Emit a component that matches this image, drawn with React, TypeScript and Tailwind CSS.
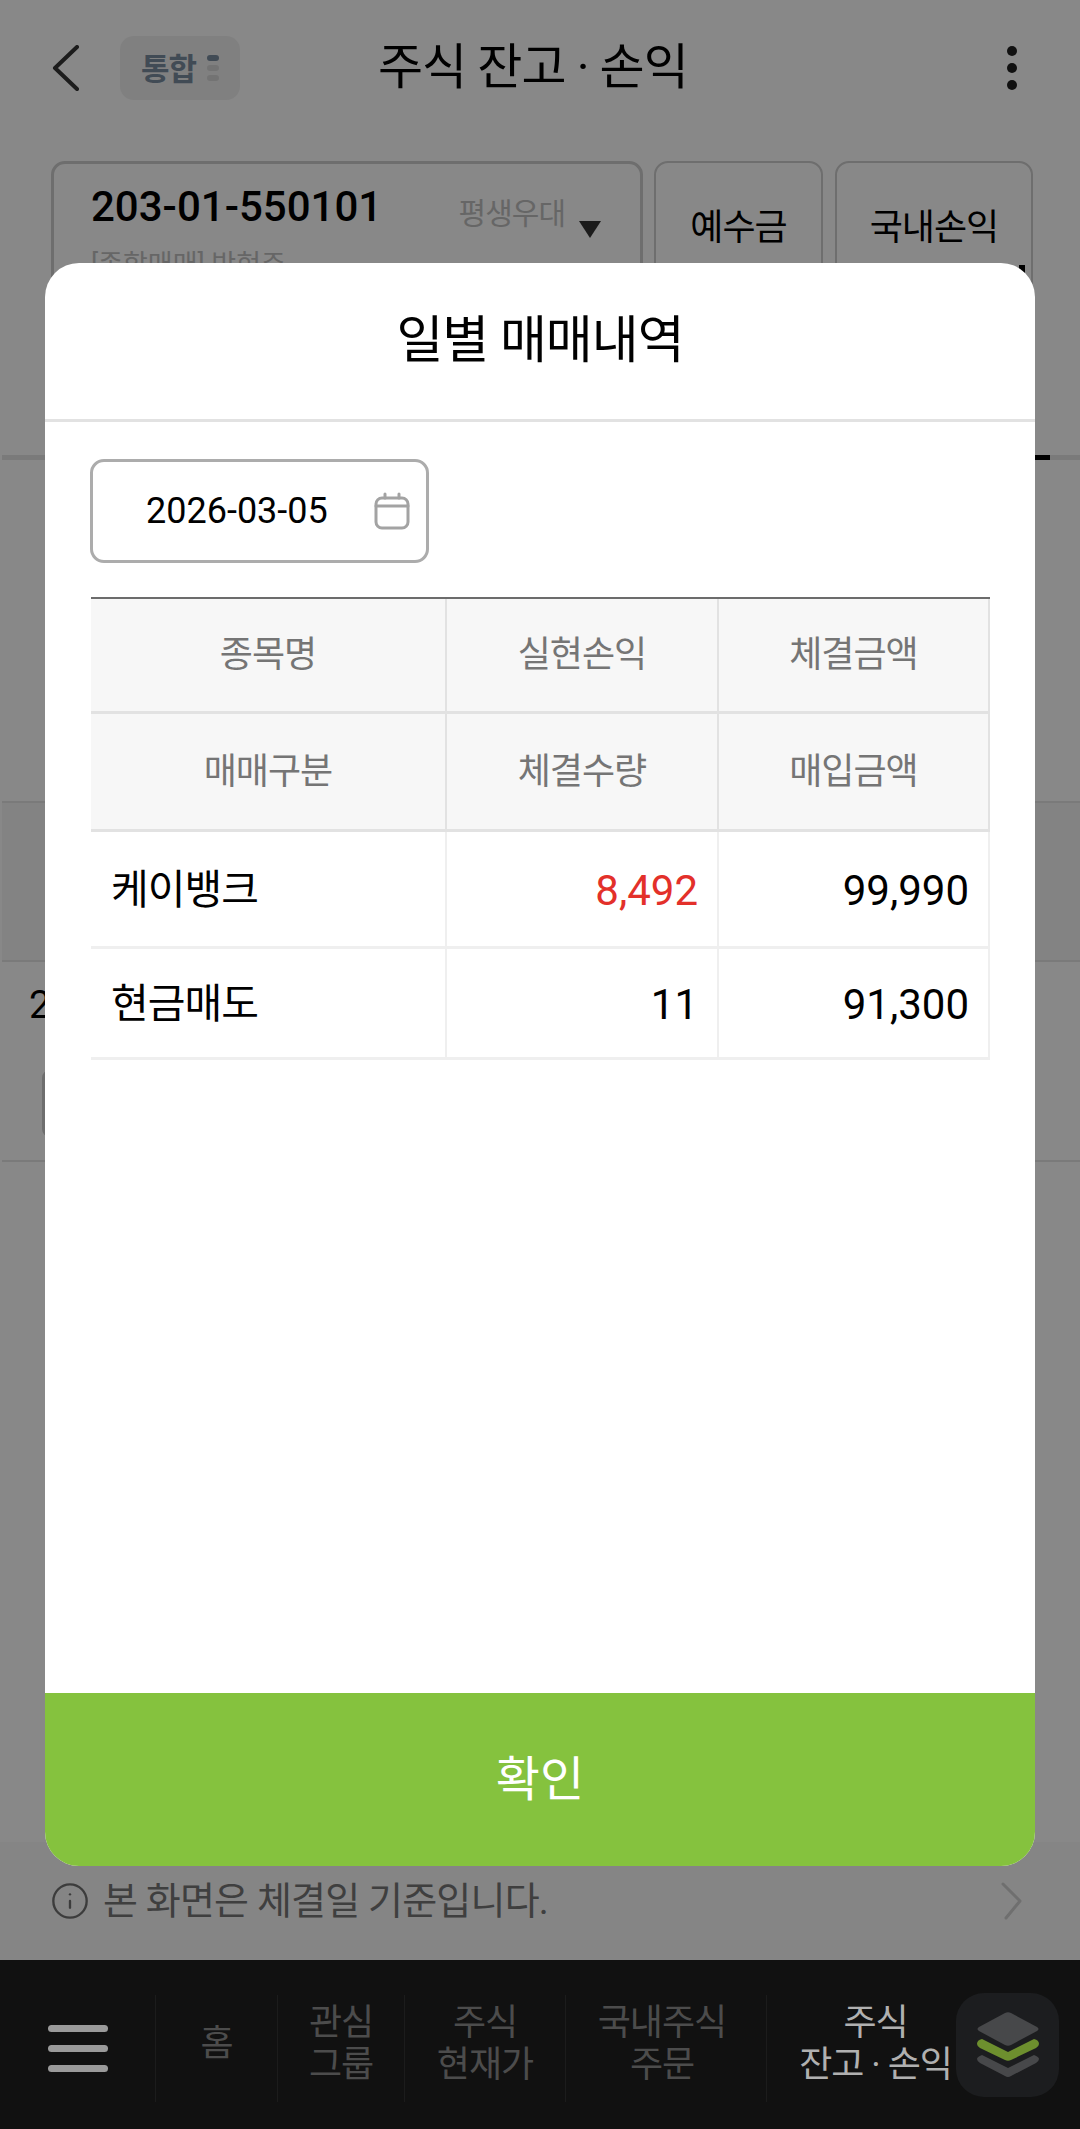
import React from 'react';
import { Info } from 'lucide-react';

const KR = "font-['Roboto','Noto_Sans_CJK_KR',sans-serif]";
const COLS = 'grid grid-cols-[356px_272px_271px]';

function HeaderCell({ label }: { label: string }) {
  return (
    <div className="flex items-center justify-center border-r-2 border-[#e2e2e2] bg-[#f7f7f7] text-[36px] tracking-[-1px] text-[#757575]">
      {label}
    </div>
  );
}

function NameCell({ label }: { label: string }) {
  return <div className="flex items-center border-r-2 border-[#efefef] pl-[20px] pt-[3px] text-[41px] tracking-[-1px]">{label}</div>;
}

function NumCell({ label, red }: { label: string; red?: boolean }) {
  return (
    <div className={`flex items-center justify-end border-r-2 border-[#efefef] pr-[19px] pt-[2px] text-[42px] ${red ? 'text-[#e3302a]' : 'text-black'}`}>
      {label}
    </div>
  );
}

function NavItem({ lines, width, active }: { lines: string[]; width: string; active?: boolean }) {
  return (
    <div className={`flex h-[107px] flex-col items-center justify-center border-l border-[#1c1c1c] pb-[9px] text-[36px] leading-[42px] tracking-[-1px] ${width} ${active ? 'text-[#b0b0b0]' : 'text-[#4c4c4c]'}`}>
      {lines.map((line) => (
        <span key={line} className="whitespace-nowrap">{line}</span>
      ))}
    </div>
  );
}

export default function App() {
  return (
    <div className={`relative h-[2129px] w-[1080px] overflow-hidden bg-[#888888] text-black ${KR}`}>
      {/* page behind the dim layer */}
      <div className="flex h-[136px] items-center pl-[51px] pr-[63px]">
        <svg width="30" height="46" viewBox="0 0 30 46" fill="none">
          <path d="M26 2 L4 23 L26 44" stroke="#1c1c1c" strokeWidth="4" strokeLinecap="round" strokeLinejoin="round" />
        </svg>
        <div className="ml-[39px] flex h-[64px] w-[120px] items-center justify-center gap-[11px] rounded-[14px] bg-[#808080]">
          <span className="pt-[5px] text-[31px] font-bold tracking-[-1px] text-[#414b55]">통합</span>
          <div className="flex flex-col gap-[4px]">
            <span className="h-[6px] w-[12px] rounded-full bg-[#414b55]" />
            <span className="h-[6px] w-[12px] rounded-full bg-[#737373]" />
            <span className="h-[6px] w-[12px] rounded-full bg-[#737373]" />
          </div>
        </div>
        <h1 className="ml-[138px] flex-1 text-[49px] tracking-[-1px]">주식 잔고 · 손익</h1>
        <div className="flex flex-col gap-[7px]">
          <span className="h-[10px] w-[10px] rounded-full bg-[#111111]" />
          <span className="h-[10px] w-[10px] rounded-full bg-[#111111]" />
          <span className="h-[10px] w-[10px] rounded-full bg-[#111111]" />
        </div>
      </div>

      <div className="mt-[25px] flex pl-[51px]">
        <div className="h-[140px] w-[592px] rounded-[14px] border-[3px] border-[#6e6e6e] px-[37px] pt-[11px]">
          <div className="flex items-center justify-between">
            <span className="text-[42px] font-medium">203-01-550101</span>
            <div className="mr-[2px] mt-[14px] flex items-center gap-[14px]">
              <span className="text-[30px] tracking-[-1px] text-[#666666]">평생우대</span>
              <span className="mt-[32px] h-0 w-0 border-x-[11px] border-t-[17px] border-x-transparent border-t-[#1c1c1c]" />
            </div>
          </div>
          <div className="mt-[7px] text-[27px] text-[#666666]">[종합매매] 박현주</div>
        </div>
        <div className="ml-[11px] flex h-[140px] w-[169px] justify-center rounded-[14px] border-2 border-[#6e6e6e] pt-[38px] text-[36px] tracking-[-1px]">예수금</div>
        <div className="relative ml-[12px] flex h-[140px] w-[198px] justify-center rounded-[14px] border-2 border-[#6e6e6e] pt-[38px] text-[36px] tracking-[-1px]">
          국내손익
          <span className="absolute left-[182px] top-[102px] h-[12px] w-[6px] bg-black" />
        </div>
      </div>

      <div className="ml-[2px] mt-[154px] flex h-[5px] justify-end bg-[#7a7a7a]">
        <div className="mr-[30px] h-[5px] w-[40px] bg-black" />
      </div>

      <div className="ml-[2px] mt-[341px] h-[161px] border-y-2 border-[#7a7a7a] bg-[#838383]" />
      <div className="pl-[29px] pt-[23px] text-[39px] leading-[40px]">2</div>
      <div className="ml-[42px] mt-[45px] h-[67px] w-[40px] rounded-[8px] border-[3px] border-[#6e6e6e]" />
      <div className="ml-[2px] mt-[23px] h-[2px] bg-[#7a7a7a]" />

      {/* footer strip with the notice */}
      <div className="absolute inset-x-0 top-[1842px] flex h-[118px] items-center bg-[#858585] pl-[50px] pr-[58px]">
        <Info className="h-[40px] w-[40px] text-[#3c3c3c]" strokeWidth={1.4} />
        <span className="ml-[13px] flex-1 text-[38px] tracking-[-0.8px] text-[#3f3f3f]">본 화면은 체결일 기준입니다.</span>
        <svg width="21" height="38" viewBox="0 0 21 38" fill="none">
          <path d="M2 2 L19 19 L5 36" stroke="#6f6f6f" strokeWidth="3" strokeLinecap="round" strokeLinejoin="round" />
        </svg>
      </div>

      {/* bottom navigation */}
      <div className="absolute inset-x-0 bottom-0 flex h-[169px] items-start bg-[#111111] pt-[35px]">
        <div className="flex h-[107px] w-[155px] flex-col items-center justify-center gap-[13px]">
          <span className="h-[7px] w-[60px] rounded-full bg-[#9a9a9a]" />
          <span className="h-[7px] w-[60px] rounded-full bg-[#9a9a9a]" />
          <span className="h-[7px] w-[60px] rounded-full bg-[#9a9a9a]" />
        </div>
        <NavItem lines={['홈']} width="w-[122px]" />
        <NavItem lines={['관심', '그룹']} width="w-[127px]" />
        <NavItem lines={['주식', '현재가']} width="w-[161px]" />
        <NavItem lines={['국내주식', '주문']} width="w-[201px] pr-[8px]" />
        <NavItem lines={['주식', '잔고 · 손익']} width="w-[224px] pr-[6px]" active />
      </div>

      {/* floating layers button */}
      <div className="absolute left-[956px] top-[1993px] flex h-[104px] w-[103px] items-center justify-center rounded-[28px] bg-[#1c1d1f]">
        <svg width="64" height="68" viewBox="0 0 64 68" fill="none">
          <path d="M29 2 Q32 0.5 35 2 L61 16 Q64 18 61 20 L35 34 Q32 35.5 29 34 L3 20 Q0 18 3 16 Z" fill="#47484a" />
          <path d="M6 28 L32 41 L58 28 Q63 29 63 33 Q63 35 60 37 L35 49 Q32 50.5 29 49 L4 37 Q1 35 1 33 Q1 29 6 28 Z" fill="#6d8f2e" />
          <path d="M6 44 L32 57 L58 44 Q63 46 63 48 Q63 50 60 52 L35 65 Q32 67 29 65 L4 52 Q1 50 1 48 Q1 46 6 44 Z" fill="#47484a" />
        </svg>
      </div>

      {/* modal */}
      <div className="absolute left-[45px] top-[263px] flex h-[1603px] w-[990px] flex-col overflow-hidden rounded-[34px] bg-white">
        <div className="flex h-[159px] shrink-0 items-center justify-center border-b-[3px] border-[#e2e2e2] text-[51px] tracking-[-1px]">일별 매매내역</div>

        <div className="flex-1 pl-[45px] pt-[37px]">
          <div className="flex h-[104px] w-[339px] items-center justify-between rounded-[14px] border-[3px] border-[#acacac] pl-[53px] pr-[16px] text-[36px]">
            <span>2026-03-05</span>
            <svg width="36" height="38" viewBox="0 0 36 38" fill="none" stroke="#a3a3a3" strokeWidth="3" strokeLinecap="round">
              <rect x="2" y="6" width="32" height="30" rx="6" />
              <path d="M2 14 H34" />
              <path d="M11 2 V6" />
              <path d="M25 2 V6" />
            </svg>
          </div>

          <div className="ml-[1px] mt-[34px] w-[899px] border-t-2 border-[#6c6c6c]">
            <div className={`${COLS} h-[115px] border-b-[3px] border-[#e2e2e2]`}>
              <HeaderCell label="종목명" />
              <HeaderCell label="실현손익" />
              <HeaderCell label="체결금액" />
            </div>
            <div className={`${COLS} h-[118px] border-b-[3px] border-[#e2e2e2]`}>
              <HeaderCell label="매매구분" />
              <HeaderCell label="체결수량" />
              <HeaderCell label="매입금액" />
            </div>
            <div className={`${COLS} h-[117px] border-b-[3px] border-[#efefef]`}>
              <NameCell label="케이뱅크" />
              <NumCell label="8,492" red />
              <NumCell label="99,990" />
            </div>
            <div className={`${COLS} h-[111px] border-b-[3px] border-[#efefef]`}>
              <NameCell label="현금매도" />
              <NumCell label="11" />
              <NumCell label="91,300" />
            </div>
          </div>
        </div>

        <div className="flex h-[173px] shrink-0 items-center justify-center bg-[#85c23e] text-[48px] text-white">확인</div>
      </div>
    </div>
  );
}
